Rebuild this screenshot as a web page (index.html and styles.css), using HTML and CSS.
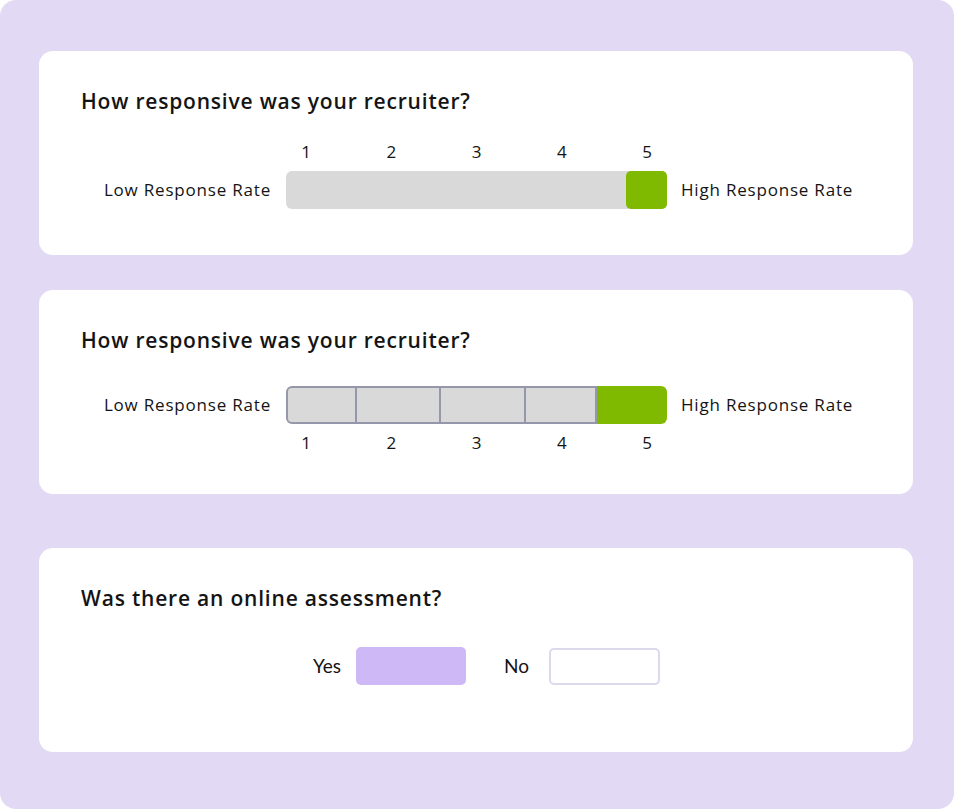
FILE: index.html
```html
<!DOCTYPE html>
<html lang="en">
<head>
<meta charset="utf-8">
<title>Recruiter survey</title>
<link rel="stylesheet" href="styles.css">
</head>
<body>
<div class="frame">
  <section class="card card-first">
    <h2 class="question">How responsive was your recruiter?</h2>
    <div class="scale scale-top">
      <div class="numbers">
        <span>1</span><span>2</span><span>3</span><span>4</span><span>5</span>
      </div>
      <div class="rate-row">
        <span class="rate-label low">Low Response Rate</span>
        <div class="bar">
          <div class="bar-fill"></div>
        </div>
        <span class="rate-label high">High Response Rate</span>
      </div>
    </div>
  </section>

  <section class="card card-second">
    <h2 class="question">How responsive was your recruiter?</h2>
    <div class="scale scale-bottom">
      <div class="rate-row">
        <span class="rate-label low">Low Response Rate</span>
        <div class="seg-bar">
          <div class="seg seg-a"></div>
          <div class="seg seg-b"></div>
          <div class="seg seg-c"></div>
          <div class="seg seg-d"></div>
          <div class="seg-on"></div>
        </div>
        <span class="rate-label high">High Response Rate</span>
      </div>
      <div class="numbers">
        <span>1</span><span>2</span><span>3</span><span>4</span><span>5</span>
      </div>
    </div>
  </section>

  <section class="card card-third">
    <h2 class="question">Was there an online assessment?</h2>
    <div class="choices">
      <span class="choice-label">Yes</span>
      <div class="choice-box selected"></div>
      <span class="choice-label no">No</span>
      <div class="choice-box"></div>
    </div>
  </section>
</div>
</body>
</html>
```
FILE: styles.css
```css
* { box-sizing: border-box; }

html, body {
  margin: 0;
  padding: 0;
  background: #ffffff;
}

body {
  font-family: "Open Sans", "Lato", "Noto Sans", sans-serif;
  color: #141414;
}

.frame {
  width: 954px;
  height: 809px;
  background: #e2d9f4;
  border-radius: 16px;
  padding: 51px 41px 0 39px;
  display: flex;
  flex-direction: column;
}

.card {
  width: 874px;
  height: 204px;
  background: #ffffff;
  border-radius: 14px;
  padding: 36px 42px 0 42px;
}

.card-second { margin-top: 35px; }
.card-third { margin-top: 54px; }

.question {
  margin: 0;
  font-size: 21px;
  line-height: 28px;
  font-weight: 600;
  letter-spacing: 0.8px;
}

.scale-top { margin-top: 26px; }
.scale-bottom { margin-top: 32px; }

.numbers {
  margin-left: 205px;
  width: 381px;
  padding: 0 10px;
  display: flex;
  justify-content: space-between;
  font-size: 17px;
  line-height: 22px;
  font-weight: 500;
}

.numbers span {
  width: 20px;
  text-align: center;
}

.scale-top .numbers { margin-bottom: 8px; }
.scale-bottom .numbers { margin-top: 8px; }

.rate-row {
  display: flex;
  align-items: center;
  height: 38px;
}

.rate-label {
  font-size: 17px;
  line-height: 22px;
  white-space: nowrap;
  letter-spacing: 0.8px;
}

.rate-label.low {
  width: 190px;
  text-align: right;
  margin-right: 15px;
}

.rate-label.high {
  margin-left: 14px;
}

.bar {
  width: 381px;
  height: 38px;
  background: #d9d9d9;
  border-radius: 6px;
  display: flex;
  justify-content: flex-end;
}

.bar-fill {
  width: 41px;
  height: 38px;
  background: #80ba00;
  border-radius: 5px;
}

.seg-bar {
  width: 381px;
  height: 38px;
  display: flex;
}

.seg {
  height: 38px;
  background: #d9d9d9;
  border-top: 2px solid #9597ab;
  border-bottom: 2px solid #9597ab;
  border-right: 2px solid #9597ab;
}

.seg-a {
  width: 71px;
  border-left: 2px solid #9597ab;
  border-radius: 6px 0 0 6px;
}
.seg-b { width: 84px; }
.seg-c { width: 85px; }
.seg-d { width: 71px; }

.seg-on {
  width: 70px;
  height: 38px;
  background: #80ba00;
  border-radius: 0 6px 6px 0;
}

.choices {
  margin-top: 35px;
  margin-left: 232px;
  display: flex;
  align-items: center;
  height: 38px;
}

.choice-label {
  font-family: "Lato", "Noto Sans", sans-serif;
  font-size: 19px;
  line-height: 24px;
  margin-right: 15px;
}

.choice-label.no {
  margin-left: 38px;
  margin-right: 20px;
}

.choice-box {
  width: 111px;
  height: 37px;
  border: 2px solid #ddd8ec;
  border-radius: 5px;
  background: #ffffff;
}

.choice-box.selected {
  width: 110px;
  height: 38px;
  border: none;
  background: #cfb8f6;
}
```
